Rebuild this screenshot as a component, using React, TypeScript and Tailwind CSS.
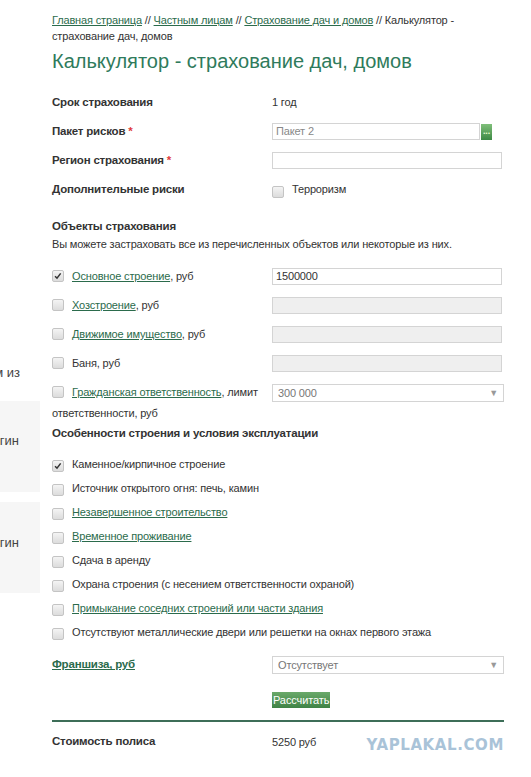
import { ReactNode } from "react";

const font = { fontFamily: "'Liberation Sans', Arial, sans-serif" };

function Box({ checked = false }: { checked?: boolean }) {
  return (
    <span className="relative mr-[8px] inline-block h-[12px] w-[12px] shrink-0 translate-y-[2px] rounded-[2px] border border-[#c4c4c4] bg-gradient-to-b from-[#f4f4f4] to-[#dcdcdc] align-baseline">
      {checked && (
        <svg viewBox="0 0 12 12" className="absolute left-[0px] top-[0px] h-[10px] w-[10px]">
          <path d="M2.5 6.2 L4.8 8.6 L9.2 2.8" fill="none" stroke="#333" strokeWidth="1.8" />
        </svg>
      )}
    </span>
  );
}

function A({ children, bold = false }: { children: ReactNode; bold?: boolean }) {
  return <span className={`text-[#2b6b4c] underline ${bold ? "font-bold" : ""}`}>{children}</span>;
}

function FieldRow({ label, children }: { label: ReactNode; children?: ReactNode }) {
  return (
    <div className="flex h-[29px] items-center">
      <div className="w-[220px] text-[11.5px] font-bold tracking-[-0.2px]">{label}</div>
      <div className="flex-1">{children}</div>
    </div>
  );
}

function Input({ value = "", disabled = false, gray = false, w = "w-[230px]" }: { value?: string; disabled?: boolean; gray?: boolean; w?: string }) {
  return (
    <div
      className={`h-[17px] ${w} border border-[#d4d4d4] px-[3px] leading-[15px] ${disabled ? "bg-[#efefef]" : "bg-white"} ${gray ? "text-[#888]" : "text-[#333]"}`}
    >
      {value}
    </div>
  );
}

function Select({ value }: { value: string }) {
  return (
    <div className="flex h-[18px] w-[232px] items-center justify-between border border-[#d4d4d4] bg-white px-[5px] leading-[16px] text-[#777]">
      <span>{value}</span>
      <span className="text-[9px] text-[#999]">▼</span>
    </div>
  );
}

function ObjRow({ checked, label, children }: { checked?: boolean; label: ReactNode; children?: ReactNode }) {
  return (
    <div className="flex py-[4px]">
      <div className="w-[220px] pr-[6px] leading-[21px]">
        <Box checked={checked} />
        {label}
      </div>
      <div className="flex-1 pt-[2px]">{children}</div>
    </div>
  );
}

function CheckRow({ checked, children }: { checked?: boolean; children: ReactNode }) {
  return (
    <div className="flex h-[24px] items-center whitespace-nowrap leading-[24px]">
      <Box checked={checked} />
      <span>{children}</span>
    </div>
  );
}

export default function App() {
  return (
    <div className="flex h-[777px] overflow-hidden bg-white text-[11px] tracking-[-0.15px] text-[#333]" style={font}>
      <aside className="w-[40px] shrink-0 overflow-hidden text-[13px] leading-[18px] tracking-normal text-[#444]">
        <div className="mt-[364px] flex h-[18px] justify-end whitespace-nowrap pr-[20px]">всем из</div>
        <div className="mt-[19px] flex h-[91px] justify-end whitespace-nowrap bg-[#f6f6f6] pr-[21px] pt-[31px]">Логин</div>
        <div className="mt-[10px] flex h-[91px] justify-end whitespace-nowrap bg-[#f6f6f6] pr-[21px] pt-[32px]">Логин</div>
      </aside>

      <main className="ml-[12px] w-[452px] pt-[12px]">
        <p className="leading-[16px]">
          <A>Главная страница</A> // <A>Частным лицам</A> // <A>Страхование дач и домов</A> // Калькулятор -
          страхование дач, домов
        </p>
        <h1 className="mt-[4px] text-[20px] leading-[26px] tracking-normal text-[#2f7b5c]">
          Калькулятор - страхование дач, домов
        </h1>

        <div className="mt-[14px]">
          <FieldRow label="Срок страхования">
            <span className="text-[11px] font-normal">1 год</span>
          </FieldRow>
          <FieldRow
            label={
              <>
                Пакет рисков <span className="text-[#e03a3a]">*</span>
              </>
            }
          >
            <div className="flex items-center">
              <Input value="Пакет 2" gray w="w-[208px]" />
              <span className="ml-[1px] flex h-[16px] w-[11px] items-center justify-center bg-gradient-to-b from-[#7fbf7a] to-[#3d8a45]">
                <span className="text-[9px] font-bold leading-none text-[#e8ffd0]">...</span>
              </span>
            </div>
          </FieldRow>
          <FieldRow
            label={
              <>
                Регион страхования <span className="text-[#e03a3a]">*</span>
              </>
            }
          >
            <Input />
          </FieldRow>
          <FieldRow label="Дополнительные риски">
            <div className="flex items-center">
              <Box />
              <span>Терроризм</span>
            </div>
          </FieldRow>
        </div>

        <h2 className="mt-[13px] text-[11.5px] font-bold leading-[18px] tracking-[-0.2px]">Объекты страхования</h2>
        <p className="whitespace-nowrap leading-[18px]">Вы можете застраховать все из перечисленных объектов или некоторые из них.</p>

        <div className="mt-[9px]">
          <ObjRow checked label={<><A>Основное строение</A>, руб</>}>
            <Input value="1500000" />
          </ObjRow>
          <ObjRow label={<><A>Хозстроение</A>, руб</>}>
            <Input disabled />
          </ObjRow>
          <ObjRow label={<><A>Движимое имущество</A>, руб</>}>
            <Input disabled />
          </ObjRow>
          <ObjRow label="Баня, руб">
            <Input disabled />
          </ObjRow>
          <ObjRow label={<><A>Гражданская ответственность</A>, лимит ответственности, руб</>}>
            <Select value="300 000" />
          </ObjRow>
        </div>

        <h2 className="-mt-[2px] text-[11.5px] font-bold leading-[14px] tracking-[-0.2px]">
          Особенности строения и условия эксплуатации
        </h2>

        <div className="mt-[12px]">
          <CheckRow checked>Каменное/кирпичное строение</CheckRow>
          <CheckRow>Источник открытого огня: печь, камин</CheckRow>
          <CheckRow><A>Незавершенное строительство</A></CheckRow>
          <CheckRow><A>Временное проживание</A></CheckRow>
          <CheckRow>Сдача в аренду</CheckRow>
          <CheckRow>Охрана строения (с несением ответственности охраной)</CheckRow>
          <CheckRow><A>Примыкание соседних строений или части здания</A></CheckRow>
          <CheckRow>Отсутствуют металлические двери или решетки на окнах первого этажа</CheckRow>
        </div>

        <div className="mt-[9px] flex h-[24px] items-center">
          <div className="w-[220px] text-[11.5px] tracking-[-0.2px]">
            <A bold>Франшиза, руб</A>
          </div>
          <Select value="Отсутствует" />
        </div>

        <div className="mt-[15px] flex">
          <div className="w-[220px]" />
          <button className="h-[16px] bg-gradient-to-b from-[#6aa96a] to-[#3f8346] px-[1px] text-[11px] leading-[16px] tracking-[-0.1px] text-white">
            Рассчитать
          </button>
        </div>

        <div className="mt-[12px] border-t-2 border-[#3d6e58]" />

        <div className="relative mt-[10px] flex h-[20px] items-center">
          <div className="w-[220px] text-[11.5px] font-bold tracking-[-0.2px]">Стоимость полиса</div>
          <div>5250 руб</div>
          <span
            className="absolute right-[0px] top-[2px] text-[15px] font-black tracking-[0.6px] text-[#a9c3d8]"
            style={{ fontFamily: "'DejaVu Sans', sans-serif" }}
          >
            YAPLAKAL.COM
          </span>
        </div>
      </main>
    </div>
  );
}
